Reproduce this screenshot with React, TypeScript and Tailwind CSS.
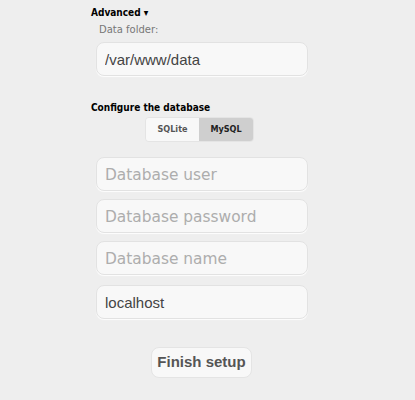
import React from "react";

const FIELDS = [
  { placeholder: "Database user", value: "" },
  { placeholder: "Database password", value: "" },
  { placeholder: "Database name", value: "" },
  { placeholder: "", value: "localhost" },
];

function Field({ placeholder, value }: { placeholder: string; value: string }) {
  return (
    <input
      readOnly
      defaultValue={value}
      placeholder={placeholder}
      className="block w-[212px] h-[34px] ml-[5px] px-[8px] rounded-[8px] border border-[#e2e2e2] bg-[#f8f8f8] text-[15px] text-[#444] placeholder:text-[#adadad] placeholder:text-[15.4px] placeholder:font-['DejaVu_Sans',sans-serif] shadow-[0_1px_1px_rgba(255,255,255,0.9)] outline-none font-['Liberation_Sans',Arial,sans-serif]"
    />
  );
}

export default function App() {
  return (
    <div className="min-h-screen w-[415px] bg-[#eeeeee] font-['DejaVu_Sans',sans-serif]">
      <div className="ml-[91px] w-[221px] pt-[6px]">
        <div className="text-[10px] font-bold text-black leading-[13px] font-['DejaVu_Sans_Condensed','DejaVu_Sans',sans-serif]">
          Advanced ▾
        </div>
        <div className="mt-[5px] ml-[8px] text-[10px] text-[#777] leading-[12px]">Data folder:</div>
        <div className="mt-[6px]">
          <Field placeholder="" value="/var/www/data" />
        </div>

        <div className="mt-[25px] text-[10px] font-bold text-black leading-[13px] font-['DejaVu_Sans_Condensed','DejaVu_Sans',sans-serif]">
          Configure the database
        </div>
        <div className="mt-[3px] ml-[54px] flex w-[109px] h-[25px] rounded-[4px] overflow-hidden border border-[#e4e4e4] text-[9px] font-bold font-['DejaVu_Sans_Condensed','DejaVu_Sans',sans-serif]">
          <div className="w-[53px] flex items-center justify-center bg-[#f8f8f8] text-[#555]">SQLite</div>
          <div className="flex-1 flex items-center justify-center bg-[#cfcfcf] text-[#222]">MySQL</div>
        </div>

        <div className="mt-[15px] flex flex-col gap-[8px]">
          {FIELDS.map((f, i) => (
            <div key={i} className={i === 3 ? "mt-[2px]" : ""}>
              <Field placeholder={f.placeholder} value={f.value} />
            </div>
          ))}
        </div>

        <div className="mt-[28px] ml-[60px]">
          <button className="h-[31px] w-[101px] rounded-[8px] border border-[#e4e4e4] bg-[#f8f8f8] text-[15px] font-bold text-[#555] font-['Liberation_Sans',Arial,sans-serif]">
            Finish setup
          </button>
        </div>
      </div>
    </div>
  );
}
